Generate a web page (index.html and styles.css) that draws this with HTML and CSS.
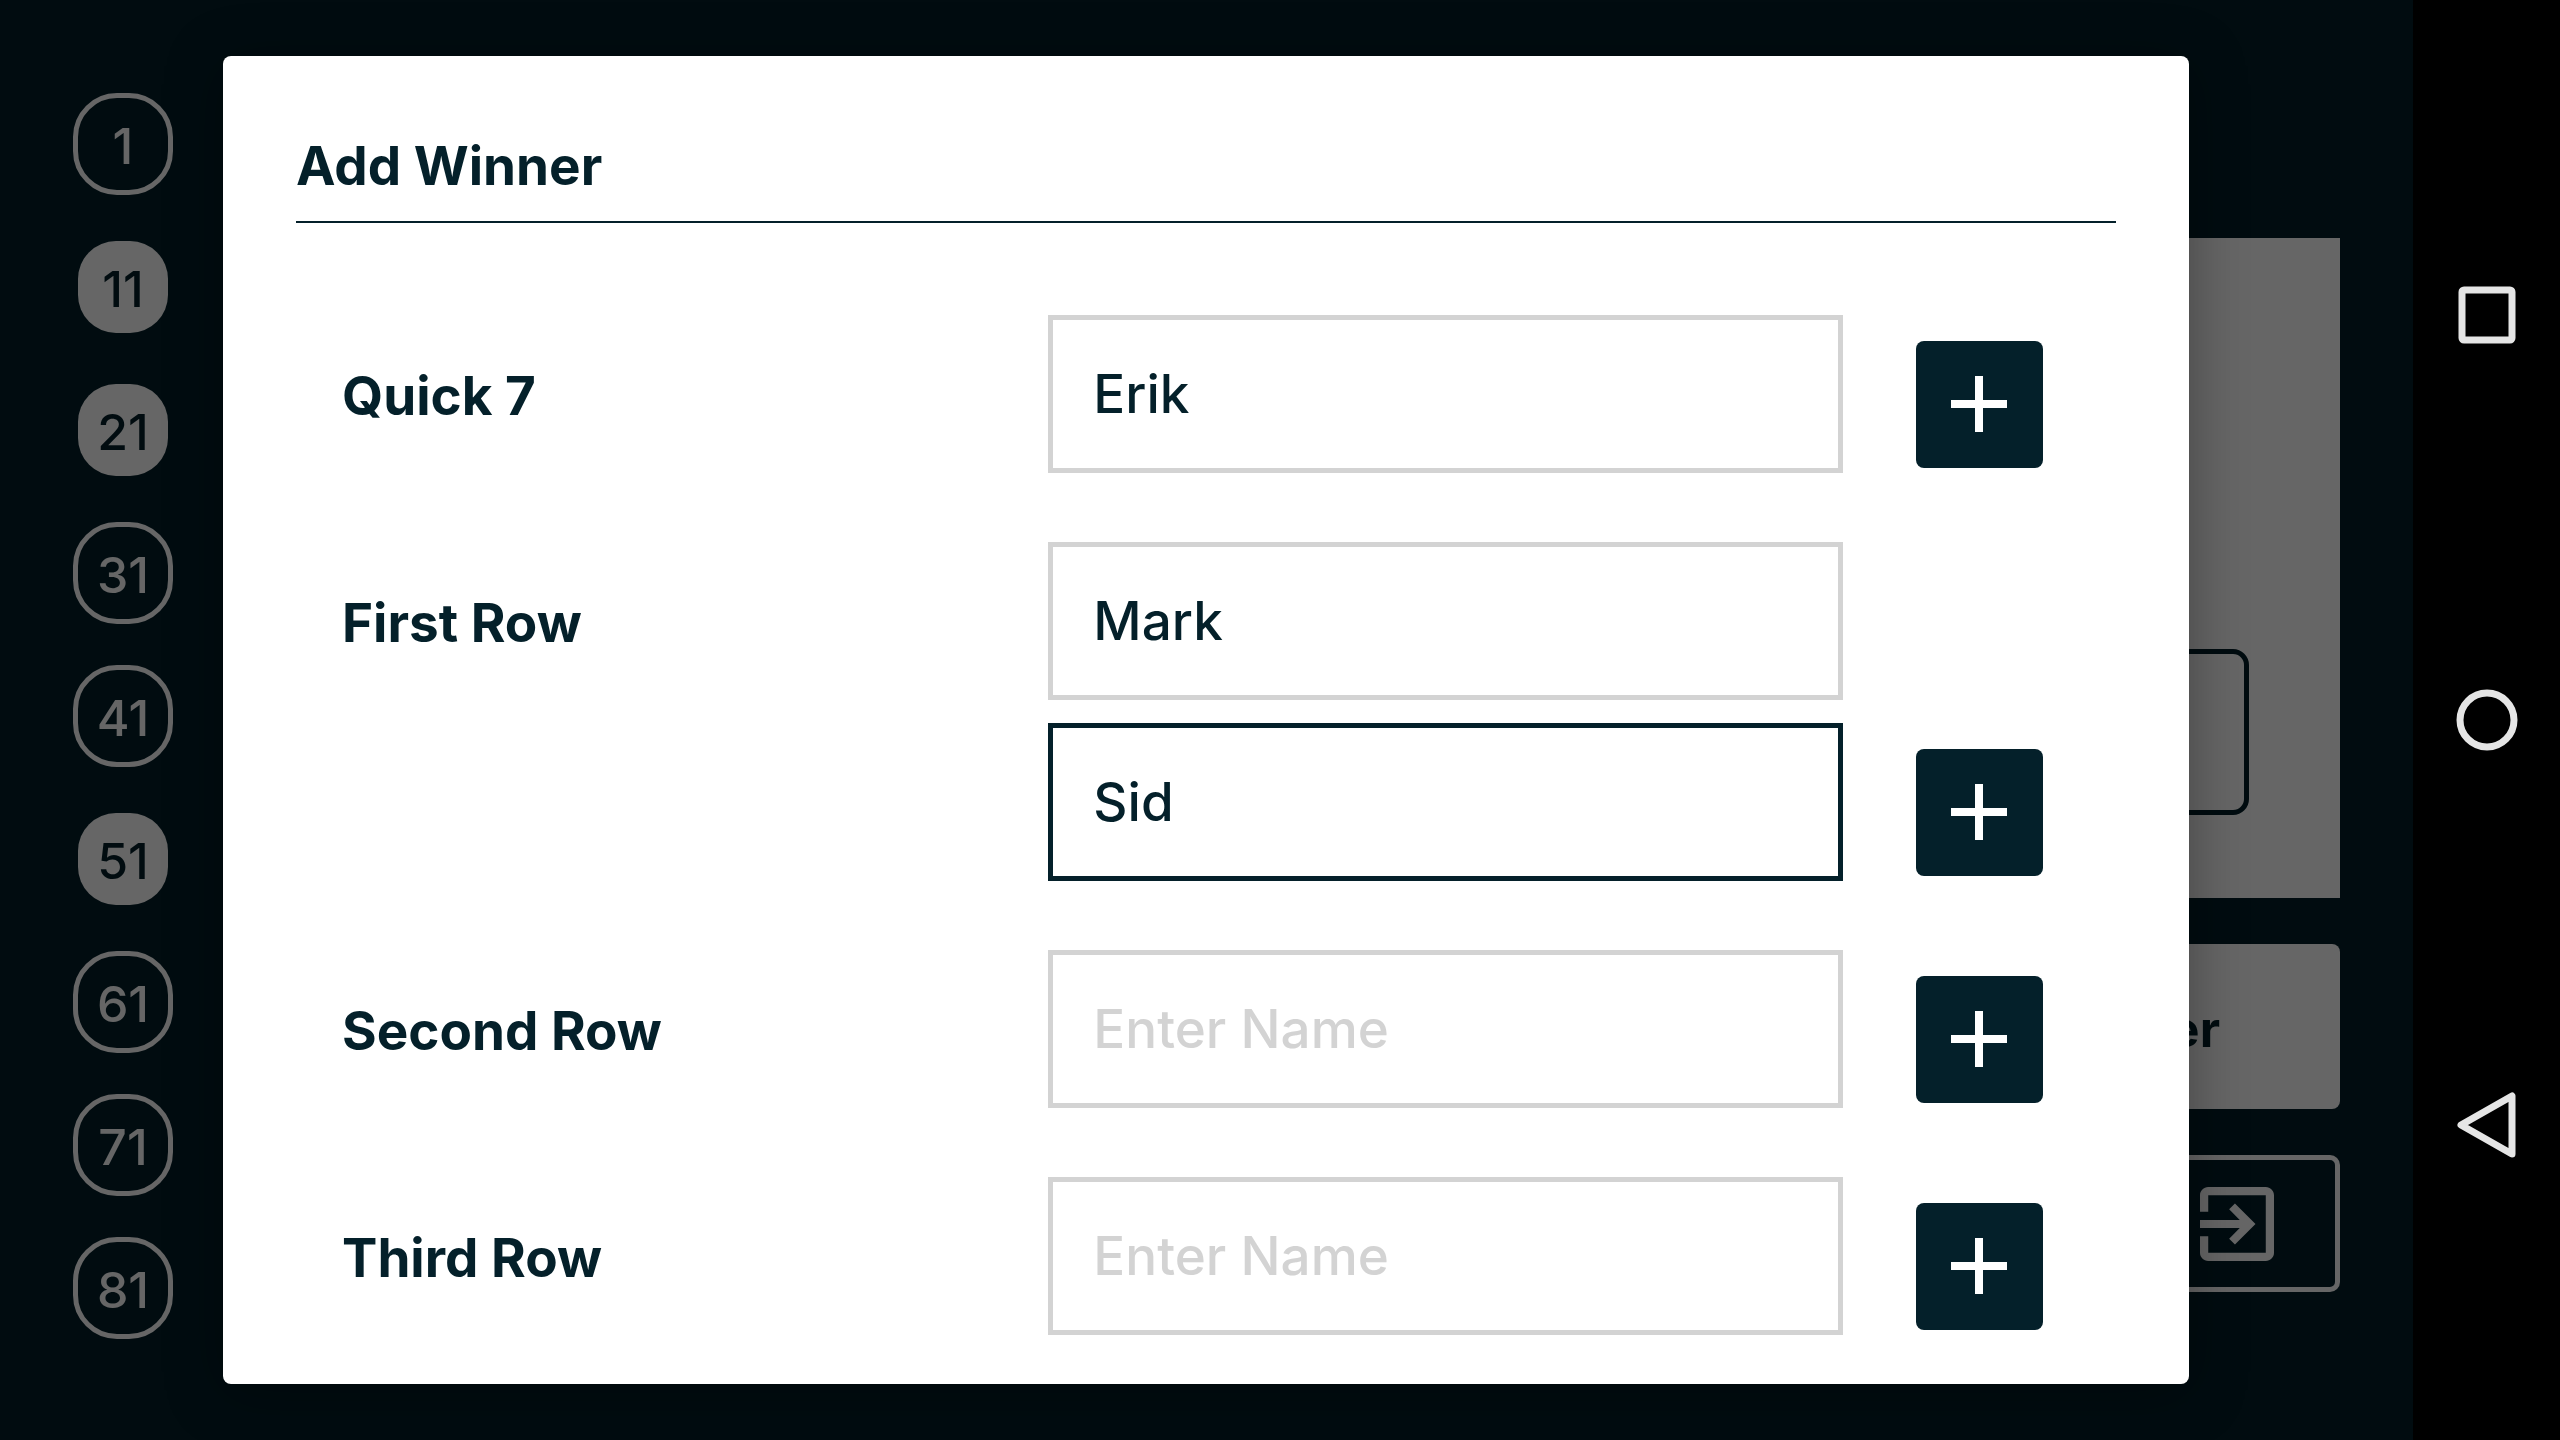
FILE: index.html
```html
<!DOCTYPE html>
<html lang="en">
<head>
<meta charset="utf-8">
<meta name="viewport" content="width=device-width, initial-scale=1">
<title>Add Winner</title>
<link rel="stylesheet" href="styles.css">
</head>
<body>
<div class="app">
  <div class="screen">
    <div class="board">
      <ol class="numbers">
        <li class="chip">1</li>
        <li class="chip chip-called">11</li>
        <li class="chip chip-called">21</li>
        <li class="chip">31</li>
        <li class="chip">41</li>
        <li class="chip chip-called">51</li>
        <li class="chip">61</li>
        <li class="chip">71</li>
        <li class="chip">81</li>
      </ol>
      <aside class="side">
        <div class="panel">
          <button class="panel-button" type="button" aria-label="Next number"></button>
        </div>
        <button class="winner-button" type="button">Winner</button>
        <button class="exit-button" type="button" aria-label="Exit">
          <svg class="exit-icon" viewBox="3 3 18 18" aria-hidden="true"><path fill="currentColor" d="M10.09 15.59 11.5 17l5-5-5-5-1.41 1.41L12.67 11H3v2h9.67l-2.58 2.59zM19 3H5c-1.11 0-2 .9-2 2v4h2V5h14v14H5v-4H3v4c0 1.1.89 2 2 2h14c1.1 0 2-.9 2-2V5c0-1.1-.9-2-2-2z"/></svg>
        </button>
      </aside>
    </div>

    <div class="overlay">
      <form class="dialog" role="dialog" aria-labelledby="dialog-title">
        <h1 class="dialog-title" id="dialog-title">Add Winner</h1>
        <div class="prizes">
          <div class="prize">
            <label class="prize-label" for="quick7">Quick 7</label>
            <div class="prize-names">
              <input class="name-input" id="quick7" type="text" value="Erik" placeholder="Enter Name">
            </div>
            <button class="add-button" type="button" aria-label="Add name to Quick 7"><svg class="add-icon" viewBox="0 0 56 56" aria-hidden="true"><path fill="currentColor" d="M24 0h8v24h24v8H32v24h-8V32H0v-8h24z"/></svg></button>
          </div>
          <div class="prize">
            <label class="prize-label" for="first-row">First Row</label>
            <div class="prize-names">
              <input class="name-input" id="first-row" type="text" value="Mark" placeholder="Enter Name">
              <input class="name-input name-input-active" type="text" value="Sid" placeholder="Enter Name" aria-label="First Row, second name">
            </div>
            <button class="add-button" type="button" aria-label="Add name to First Row"><svg class="add-icon" viewBox="0 0 56 56" aria-hidden="true"><path fill="currentColor" d="M24 0h8v24h24v8H32v24h-8V32H0v-8h24z"/></svg></button>
          </div>
          <div class="prize">
            <label class="prize-label" for="second-row">Second Row</label>
            <div class="prize-names">
              <input class="name-input" id="second-row" type="text" placeholder="Enter Name">
            </div>
            <button class="add-button" type="button" aria-label="Add name to Second Row"><svg class="add-icon" viewBox="0 0 56 56" aria-hidden="true"><path fill="currentColor" d="M24 0h8v24h24v8H32v24h-8V32H0v-8h24z"/></svg></button>
          </div>
          <div class="prize">
            <label class="prize-label" for="third-row">Third Row</label>
            <div class="prize-names">
              <input class="name-input" id="third-row" type="text" placeholder="Enter Name">
            </div>
            <button class="add-button" type="button" aria-label="Add name to Third Row"><svg class="add-icon" viewBox="0 0 56 56" aria-hidden="true"><path fill="currentColor" d="M24 0h8v24h24v8H32v24h-8V32H0v-8h24z"/></svg></button>
          </div>
        </div>
      </form>
    </div>
  </div>

  <nav class="system-bar" aria-label="System">
    <button class="system-button" type="button" aria-label="Recent apps"><svg class="system-icon" viewBox="0 0 66 66" aria-hidden="true"><rect x="8" y="8" width="50" height="50" rx="2"/></svg></button>
    <button class="system-button" type="button" aria-label="Home"><svg class="system-icon" viewBox="0 0 66 66" aria-hidden="true"><circle cx="33" cy="33" r="27"/></svg></button>
    <button class="system-button" type="button" aria-label="Back"><svg class="system-icon" viewBox="0 0 66 66" aria-hidden="true"><path d="M58 4v58L7 33z"/></svg></button>
  </nav>
</div>
</body>
</html>
```
FILE: styles.css
```css
:root {
  --ink: #04202a;
  --line: #d3d3d3;
}

* {
  box-sizing: border-box;
}

body {
  margin: 0;
  background: #000;
  color: var(--ink);
  font-family: Inter, "Liberation Sans", sans-serif;
}

button {
  margin: 0;
  padding: 0;
  border: 0;
  background: none;
  color: inherit;
  font: inherit;
}

.app {
  display: flex;
  height: 100vh;
}

.screen {
  position: relative;
  flex: 1;
  min-width: 0;
  overflow: hidden;
  background: var(--ink);
}

/* Board behind the dialog */

.board {
  display: flex;
  justify-content: space-between;
  height: 100%;
  padding: 93px 73px;
}

.numbers {
  display: flex;
  flex-direction: column;
  gap: 41px;
  margin: 0;
  padding: 0;
  list-style: none;
}

.chip {
  display: flex;
  align-items: center;
  justify-content: center;
  flex: none;
  width: 100px;
  height: 102px;
  padding-top: 4px;
  border: 5px solid #fff;
  border-radius: 44px;
  color: #fff;
  font-size: 50px;
  font-weight: 500;
  line-height: 60px;
}

.chip-called {
  width: 90px;
  height: 92px;
  margin: 5px;
  border: 0;
  border-radius: 38px;
  background: #fff;
  color: var(--ink);
}

.side {
  display: flex;
  flex-direction: column;
  gap: 46px;
  width: 480px;
  padding-top: 145px;
}

.panel {
  display: flex;
  flex-direction: column;
  justify-content: flex-end;
  height: 660px;
  padding: 83px 91px;
  background: #fff;
}

.panel-button {
  height: 166px;
  border: 5px solid var(--ink);
  border-radius: 16px;
}

.winner-button {
  height: 165px;
  padding: 4px 120px 0 0;
  border-radius: 8px;
  background: #fff;
  font-size: 50px;
  font-weight: 700;
  line-height: 60px;
  text-align: right;
}

.exit-button {
  display: flex;
  align-items: center;
  justify-content: flex-end;
  height: 137px;
  padding-right: 61px;
  border: 5px solid #fff;
  border-radius: 10px;
  color: #fff;
}

.exit-icon {
  width: 74px;
  height: 74px;
}

/* Dialog */

.overlay {
  position: absolute;
  inset: 0;
  display: flex;
  padding: 56px 224px 56px 223px;
  background: rgba(0, 0, 0, 0.6);
}

.dialog {
  flex: 1;
  min-width: 0;
  padding: 78px 73px 0;
  overflow: hidden;
  border-radius: 8px;
  background: #fff;
  box-shadow: 0 8px 56px rgba(0, 0, 0, 0.34);
}

.dialog-title {
  margin: 0 0 92px;
  padding-bottom: 23px;
  border-bottom: 2px solid var(--ink);
  font-size: 53px;
  font-weight: 700;
  line-height: 64px;
}

.prizes {
  display: flex;
  flex-direction: column;
  gap: 69px;
  padding: 0 73px 0 46px;
}

.prize {
  display: grid;
  grid-template-columns: minmax(0, 8fr) minmax(0, 9fr) 200px;
}

.prize-label {
  height: 158px;
  padding-top: 2px;
  font-size: 53px;
  font-weight: 700;
  line-height: 158px;
}

.prize-names {
  display: flex;
  flex-direction: column;
  gap: 23px;
}

.name-input {
  width: 100%;
  height: 158px;
  padding: 0 40px;
  border: 5px solid var(--line);
  border-radius: 0;
  outline: 0;
  background: #fff;
  color: var(--ink);
  font: 500 53px/64px Inter, "Liberation Sans", sans-serif;
}

.name-input::placeholder {
  color: var(--line);
  opacity: 1;
}

.name-input-active {
  border-color: var(--ink);
}

.add-button {
  place-self: end;
  width: 127px;
  height: 127px;
  margin-bottom: 5px;
  padding: 0 36px 1px 35px;
  border-radius: 8px;
  background: var(--ink);
  color: #fff;
}

.add-icon {
  display: block;
  width: 56px;
  height: 56px;
}

/* System navigation */

.system-bar {
  display: flex;
  flex-direction: column;
  flex: none;
  width: 147px;
  padding: 112px 0;
  background: #000;
}

.system-button {
  display: flex;
  flex: 1;
  align-items: center;
  justify-content: center;
}

.system-icon {
  width: 66px;
  height: 66px;
  fill: none;
  stroke: #e5e5e5;
  stroke-width: 7;
  stroke-linejoin: round;
}
```
